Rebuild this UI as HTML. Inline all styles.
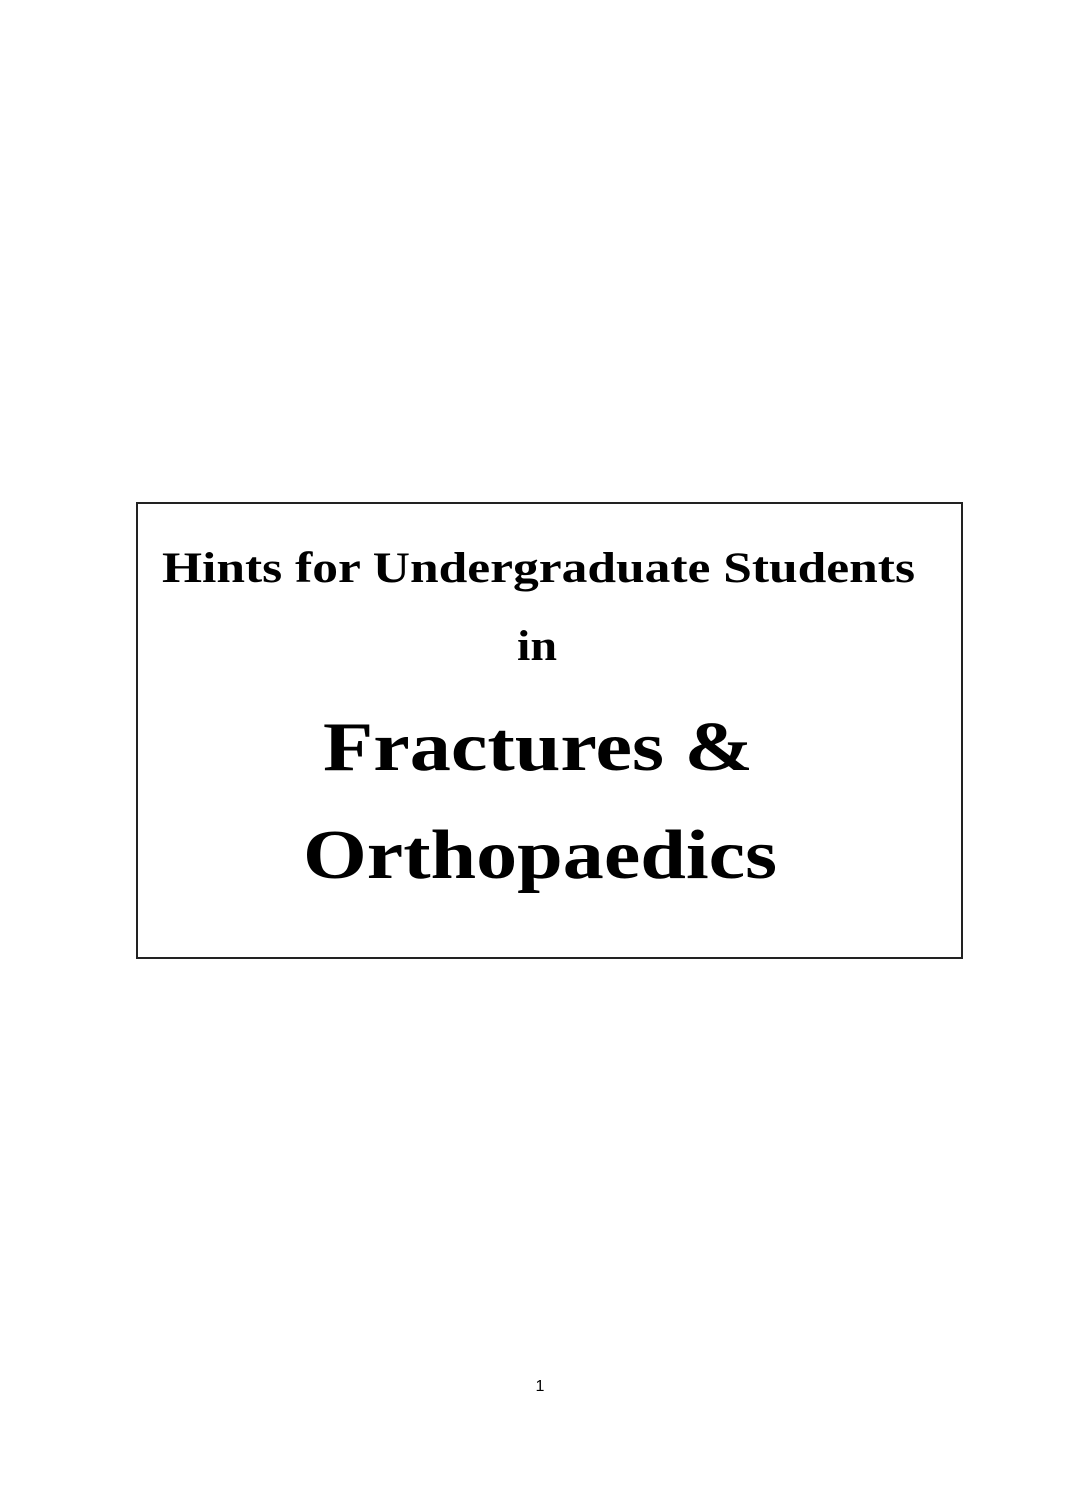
<!DOCTYPE html>
<html><head><style>
html,body{margin:0;padding:0;background:#fff;width:1080px;height:1512px;overflow:hidden}
</style></head><body>
<svg width="1080" height="1512" xmlns="http://www.w3.org/2000/svg" style="display:block">
<rect x="137" y="503" width="825" height="455" fill="none" stroke="#222" stroke-width="2"/>
<g font-family="'Liberation Serif', serif" font-weight="bold" fill="#000">
<text x="162" y="582" font-size="43" textLength="753" lengthAdjust="spacingAndGlyphs">Hints for Undergraduate Students</text>
<text x="517" y="660" font-size="43" textLength="40" lengthAdjust="spacingAndGlyphs">in</text>
<text x="323" y="770" font-size="70" textLength="430" lengthAdjust="spacingAndGlyphs">Fractures &amp;</text>
<text x="303" y="878" font-size="70" textLength="474" lengthAdjust="spacingAndGlyphs">Orthopaedics</text>
</g>
<text x="540" y="1391" font-family="'Liberation Sans', sans-serif" font-size="16" text-anchor="middle" fill="#000">1</text>
</svg>
</body></html>
